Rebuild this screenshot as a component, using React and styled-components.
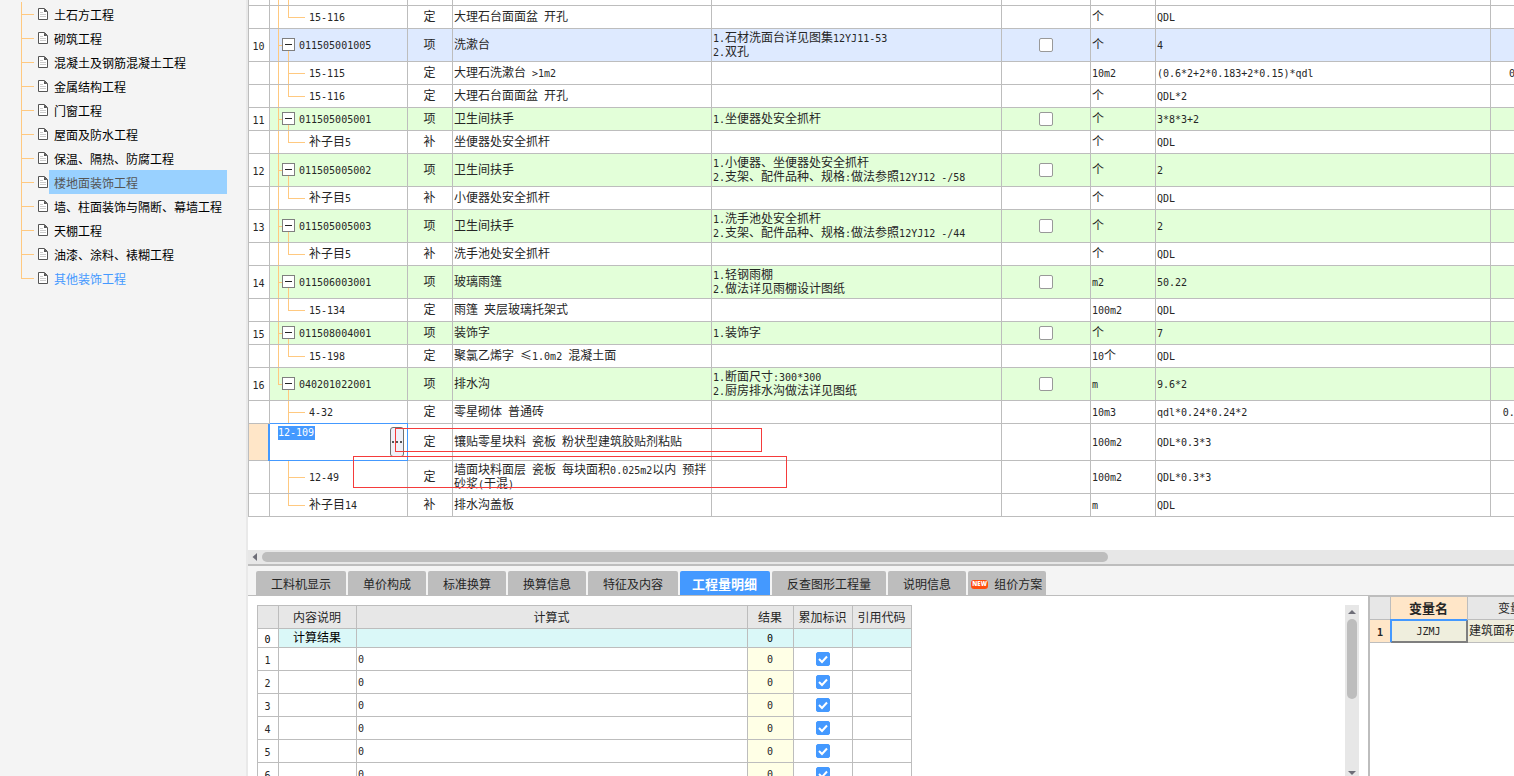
import styled, { createGlobalStyle, css } from "styled-components";

const GlobalStyle = createGlobalStyle`
  * {
    box-sizing: border-box;
  }
  body {
    margin: 0;
    background: #fff;
    color: #262626;
    font-family: "Noto Sans CJK SC", sans-serif;
    font-size: 12px;
    line-height: 14px;
  }
  button, input {
    font: inherit;
    color: inherit;
    margin: 0;
    padding: 0;
  }
`;

const LINE = "#bdbdbd";
const BLUE = "#4499ff";
const TREE = "#ffc980";

/* ---------- shared ---------- */

const Layout = styled.div`
  display: flex;
  height: 100vh;
  overflow: hidden;
`;

const Main = styled.main`
  flex: 1;
  min-width: 0;
  display: flex;
  flex-direction: column;
`;

const Latin = styled.span`
  font-family: "DejaVu Sans Mono", monospace;
  font-size: 10px;
  line-height: 10px;
`;

// half width characters get the mono font, the rest keeps the chinese one
function Text({ children }) {
  return String(children)
    .split(/([\x20-\x7e]+)/)
    .filter(Boolean)
    .map((part, i) =>
      /^[\x20-\x7e]/.test(part) ? <Latin key={i}>{part}</Latin> : part
    );
}

/* ---------- sidebar ---------- */

const Sidebar = styled.nav`
  flex: 0 0 248px;
  padding-top: 2px;
  background: #f4f4f4;
  border-right: 2px solid #e9e9e9;
`;

const TreeList = styled.ul`
  list-style: none;
  margin: 0;
  padding: 0 19px 0 21px;
`;

const TreeItem = styled.li`
  display: flex;
  align-items: center;
  height: 24px;
  padding-left: 17px;
  background-image: linear-gradient(${TREE}, ${TREE}), linear-gradient(${TREE}, ${TREE});
  background-repeat: no-repeat;
  background-size: 1px 100%, 13px 1px;
  background-position: 0 0, 0 12px;

  &:last-child {
    background-size: 1px 13px, 13px 1px;
  }
`;

const TreeLink = styled.a`
  flex: 1;
  height: 24px;
  margin-left: 1px;
  padding-left: 5px;
  line-height: 26px;
  white-space: nowrap;
  text-decoration: none;
  color: ${(p) => (p.$active ? BLUE : p.$selected ? "#555" : "#000")};
  background: ${(p) => (p.$selected ? "#99d1ff" : "none")};
`;

const sections = [
  "土石方工程",
  "砌筑工程",
  "混凝土及钢筋混凝土工程",
  "金属结构工程",
  "门窗工程",
  "屋面及防水工程",
  "保温、隔热、防腐工程",
  "楼地面装饰工程",
  "墙、柱面装饰与隔断、幕墙工程",
  "天棚工程",
  "油漆、涂料、裱糊工程",
  "其他装饰工程",
];

function DocIcon() {
  return (
    <svg width="10" height="12" viewBox="0 0 10 12" fill="none" aria-hidden="true">
      <path d="M0.5 0.5H6.5L9.5 3.5V11.5H0.5Z" fill="#fff" stroke="#555" />
      <path d="M6 0.5V4H9.5Z" fill="#555" />
      <path d="M2 4.5H5M2 6.5H8M2 8.5H8" stroke="#ccc" />
    </svg>
  );
}

/* ---------- bill table ---------- */

const BillPane = styled.section`
  position: relative;
  flex: 1;
  min-height: 0;
  overflow: hidden;
`;

const BillTable = styled.table`
  width: 100%;
  min-width: 1300px;
  table-layout: fixed;
  border-collapse: separate;
  border-spacing: 0;
  border-left: 1px solid ${LINE};
`;

const rowColors = {
  current: "#deeaff",
  item: "#e3ffd9",
};

const Row = styled.tr`
  height: ${(p) => p.$h}px;
  background: ${(p) => rowColors[p.$kind] || "#fff"};
`;

const Cell = styled.td`
  padding: 0 2px 2px 1px;
  border-right: 1px solid ${LINE};
  border-bottom: 1px solid ${LINE};
  text-align: ${(p) => p.$align || "left"};
  vertical-align: middle;
  white-space: pre-wrap;
  overflow: hidden;
`;

const IndexCell = styled(Cell)`
  padding: 0 1px 1px 0;
  text-align: center;
  background: ${(p) => (p.$editing ? "#ffe6c8" : "#fff")};
`;

const trunk = {
  full: "1px 100%",
  half: "1px 50%",
  none: "0 0",
};

// trunk, trunk branch, child line, child branch
const CodeCell = styled(Cell)`
  padding: 0 0 2px;
  background-image: linear-gradient(${TREE}, ${TREE}), linear-gradient(${TREE}, ${TREE}),
    linear-gradient(${TREE}, ${TREE}), linear-gradient(${TREE}, ${TREE});
  background-repeat: no-repeat;
  background-position: 8px 0, 8px 50%, 18px ${(p) => (p.$item ? "100%" : "0")}, 18px 50%;
  background-size: ${(p) => trunk[p.$trunk]}, ${(p) => (p.$item ? "5px 1px" : "0 0")},
    1px ${(p) => (p.$item || p.$last ? "50%" : "100%")},
    ${(p) => (p.$item || p.$blank ? "0 0" : "17px 1px")};
`;

const CodeLine = styled.div`
  display: flex;
  align-items: center;
  gap: 4px;
  padding-left: ${(p) => (p.$item ? 12 : 39)}px;
  white-space: nowrap;
`;

const Toggle = styled.button`
  display: grid;
  place-items: center;
  width: 13px;
  height: 13px;
  border: 1px solid #7f7f7f;
  background: #fff;

  &::before {
    content: "";
    width: 7px;
    height: 1px;
    background: #262626;
  }
`;

const EditCell = styled(Cell)`
  padding: 0;
  background: #fff;
  border-color: ${BLUE};
  box-shadow: -1px 0 ${BLUE}, -2px 0 ${BLUE}, 0 -1px ${BLUE};
`;

const EditBox = styled.div`
  display: flex;
  justify-content: space-between;
  height: 32px;
  padding: 0 3px 0 8px;
`;

const CodeInput = styled.input`
  width: 37px;
  height: 14px;
  border: 0;
  outline: 0;
  font-family: "DejaVu Sans Mono", monospace;
  font-size: 10px;
  color: #fff;
  background: ${BLUE};
`;

const MoreButton = styled.button`
  display: flex;
  align-items: center;
  justify-content: center;
  align-self: center;
  gap: 2px;
  width: 14px;
  height: 30px;
  border: 1px solid #707070;
  border-radius: 3px;
  background: #f0f0f8;

  i {
    width: 2px;
    height: 2px;
    background: #555;
  }
`;

const Box = styled.input`
  display: block;
  appearance: none;
  grid-area: 1 / 1;
  width: 14px;
  height: 14px;
  border: 1px solid #999;
  border-radius: 2px;
  background: #fff;

  &:checked {
    border-color: ${BLUE};
    background: ${BLUE};
  }
`;

const CheckWrap = styled.label`
  display: grid;
  place-items: center;
  padding: 1px 0 0 1px;

  svg {
    grid-area: 1 / 1;
    pointer-events: none;
  }
`;

const Mark = styled.div`
  position: absolute;
  left: ${(p) => p.$x}px;
  top: ${(p) => p.$y}px;
  width: ${(p) => p.$w}px;
  height: ${(p) => p.$h}px;
  border: 1px solid #f53b3b;
  pointer-events: none;
`;

const rows = [
  { h: 6 },
  { h: 23, code: "15-116", type: "定", name: "大理石台面面盆 开孔", unit: "个", qty: "QDL", last: true },
  { h: 33, no: 10, kind: "current", code: "011505001005", type: "项", name: "洗漱台", note: "1.石材洗面台详见图集12YJ11-53\n2.双孔", unit: "个", qty: "4" },
  { h: 23, code: "15-115", type: "定", name: "大理石洗漱台 >1m2", unit: "10m2", qty: "(0.6*2+2*0.183+2*0.15)*qdl", sum: "0.7464" },
  { h: 23, code: "15-116", type: "定", name: "大理石台面面盆 开孔", unit: "个", qty: "QDL*2", last: true },
  { h: 23, no: 11, kind: "item", code: "011505005001", type: "项", name: "卫生间扶手", note: "1.坐便器处安全抓杆", unit: "个", qty: "3*8*3+2" },
  { h: 23, code: "补子目5", type: "补", name: "坐便器处安全抓杆", unit: "个", qty: "QDL", last: true },
  { h: 33, no: 12, kind: "item", code: "011505005002", type: "项", name: "卫生间扶手", note: "1.小便器、坐便器处安全抓杆\n2.支架、配件品种、规格:做法参照12YJ12 -/58", unit: "个", qty: "2" },
  { h: 23, code: "补子目5", type: "补", name: "小便器处安全抓杆", unit: "个", qty: "QDL", last: true },
  { h: 33, no: 13, kind: "item", code: "011505005003", type: "项", name: "卫生间扶手", note: "1.洗手池处安全抓杆\n2.支架、配件品种、规格:做法参照12YJ12 -/44", unit: "个", qty: "2" },
  { h: 23, code: "补子目5", type: "补", name: "洗手池处安全抓杆", unit: "个", qty: "QDL", last: true },
  { h: 33, no: 14, kind: "item", code: "011506003001", type: "项", name: "玻璃雨篷", note: "1.轻钢雨棚\n2.做法详见雨棚设计图纸", unit: "m2", qty: "50.22" },
  { h: 23, code: "15-134", type: "定", name: "雨篷 夹层玻璃托架式", unit: "100m2", qty: "QDL", last: true },
  { h: 23, no: 15, kind: "item", code: "011508004001", type: "项", name: "装饰字", note: "1.装饰字", unit: "个", qty: "7" },
  { h: 23, code: "15-198", type: "定", name: "聚氯乙烯字 ≤1.0m2 混凝土面", unit: "10个", qty: "QDL", last: true },
  { h: 33, no: 16, kind: "item", code: "040201022001", type: "项", name: "排水沟", note: "1.断面尺寸:300*300\n2.厨房排水沟做法详见图纸", unit: "m", qty: "9.6*2", trunk: "half" },
  { h: 23, code: "4-32", type: "定", name: "零星砌体 普通砖", unit: "10m3", qty: "qdl*0.24*0.24*2", sum: "0.22118", trunk: "none" },
  { h: 37, code: "12-109", type: "定", name: "镶贴零星块料 瓷板 粉状型建筑胶贴剂粘贴", unit: "100m2", qty: "QDL*0.3*3", editing: true },
  { h: 33, code: "12-49", type: "定", name: "墙面块料面层 瓷板 每块面积0.025m2以内 预拌砂浆(干混)", unit: "100m2", qty: "QDL*0.3*3", trunk: "none" },
  { h: 23, code: "补子目14", type: "补", name: "排水沟盖板", unit: "m", qty: "QDL", trunk: "none", last: true },
];

function BillRow({ row }) {
  const isItem = Boolean(row.no);

  return (
    <Row $h={row.h} $kind={row.kind}>
      <IndexCell $editing={row.editing}>{isItem && <Text>{row.no}</Text>}</IndexCell>
      {row.editing ? (
        <EditCell>
          <EditBox>
            <CodeInput aria-label="编码" defaultValue={row.code} />
            <MoreButton type="button" aria-label="更多">
              <i />
              <i />
              <i />
            </MoreButton>
          </EditBox>
        </EditCell>
      ) : (
        <CodeCell
          $item={isItem}
          $blank={!row.code}
          $last={row.last}
          $trunk={row.trunk || "full"}
        >
          {row.code && (
            <CodeLine $item={isItem}>
              {isItem && <Toggle type="button" aria-label="折叠" />}
              <span>
                <Text>{row.code}</Text>
              </span>
            </CodeLine>
          )}
        </CodeCell>
      )}
      <Cell $align="center">{row.type}</Cell>
      <Cell>{row.name && <Text>{row.name}</Text>}</Cell>
      <Cell>{row.note && <Text>{row.note}</Text>}</Cell>
      <Cell>
        {isItem && (
          <CheckWrap>
            <Box type="checkbox" aria-label={row.name} />
          </CheckWrap>
        )}
      </Cell>
      <Cell>{row.unit && <Text>{row.unit}</Text>}</Cell>
      <Cell>{row.qty && <Text>{row.qty}</Text>}</Cell>
      <Cell $align="right">{row.sum && <Text>{row.sum}</Text>}</Cell>
    </Row>
  );
}

/* ---------- scroll bars ---------- */

const HScroll = styled.div`
  flex: 0 0 16px;
  display: flex;
  align-items: center;
  gap: 5px;
  padding-left: 4px;
  background: #e7e7e7;
  border-bottom: 2px solid ${LINE};
`;

const HThumb = styled.div`
  width: 67%;
  height: 10px;
  border-radius: 5px;
  background: ${LINE};
`;

const VScroll = styled.div`
  display: flex;
  flex-direction: column;
  align-items: center;
  flex: 0 0 14px;
  margin: 9px 9px 0 0;
  padding: 5px 0 1px;
  background: #e7e7e7;
`;

const VThumb = styled.div`
  width: 10px;
  height: 80px;
  margin: 5px 0 auto;
  border-radius: 5px;
  background: ${LINE};
`;

function Arrow({ dir }) {
  if (dir === "left")
    return (
      <svg width="5" height="8" viewBox="0 0 5 8" aria-hidden="true">
        <path d="M5 0V8L0.5 4Z" fill="#6e6e78" />
      </svg>
    );
  return (
    <svg width="8" height="4" viewBox="0 0 8 4" aria-hidden="true">
      <path d={dir === "up" ? "M0 4H8L4 0Z" : "M0 0H8L4 4Z"} fill="#6e6e78" />
    </svg>
  );
}

/* ---------- tabs ---------- */

const Tabs = styled.div`
  flex: 0 0 30px;
  display: flex;
  align-items: flex-end;
  gap: 2px;
  padding-left: 8px;
  background: #f4f4f4;
  border-bottom: 1px solid ${LINE};
`;

const Tab = styled.button`
  display: flex;
  align-items: center;
  justify-content: center;
  gap: 6px;
  height: 24px;
  padding: 2px 15px 0;
  border: 0;
  border-radius: 2px 2px 0 0;
  white-space: nowrap;
  background: ${LINE};

  ${(p) =>
    p.$active &&
    css`
      padding: 1px 13px 0 12px;
      font-size: 13px;
      font-weight: 700;
      color: #fff;
      background: ${BLUE};
    `}

  ${(p) =>
    p.$badge &&
    css`
      padding: 2px 4px 0 3px;
    `}
`;

const NewBadge = styled.span`
  width: 17px;
  height: 9px;
  border-radius: 3px;
  font-family: "Open Sans", sans-serif;
  font-size: 6px;
  font-weight: 800;
  line-height: 9px;
  text-align: center;
  color: #fff;
  background: #ff4f0f;
`;

const tabs = [
  "工料机显示",
  "单价构成",
  "标准换算",
  "换算信息",
  "特征及内容",
  "工程量明细",
  "反查图形工程量",
  "说明信息",
  "组价方案",
];

/* ---------- bottom panels ---------- */

const Bottom = styled.div`
  flex: 0 0 180px;
  display: flex;
  min-height: 0;
  overflow: hidden;
`;

const DetailPane = styled.section`
  flex: 1;
  min-width: 0;
  display: flex;
  justify-content: space-between;
`;

const DetailTable = styled.table`
  width: 655px;
  align-self: flex-start;
  margin: 9px 0 0 9px;
  table-layout: fixed;
  border-collapse: separate;
  border-spacing: 0;
  border-left: 1px solid ${LINE};
  border-top: 1px solid ${LINE};
`;

const HeadCell = styled.th`
  height: 23px;
  padding: 0 1px 0 0;
  border-right: 1px solid ${LINE};
  border-bottom: 1px solid ${LINE};
  font-size: ${(p) => (p.$current ? 13 : 12)}px;
  font-weight: ${(p) => (p.$current ? 700 : 400)};
  white-space: nowrap;
  background: ${(p) => (p.$current ? "#ffe6c8" : "#e7e7e7")};
`;

const TotalRow = styled.tr`
  height: 19px;
  color: #000;

  td:not(:first-child) {
    background: #daf8f8;
  }
`;

const DetailRow = styled.tr`
  height: 23px;

  td:nth-child(4) {
    background: #ffffe6;
  }
`;

const VarPane = styled.section`
  flex: 0 0 146px;
  overflow: hidden;
  border-left: 2px solid ${LINE};
`;

const VarTable = styled.table`
  width: 208px;
  table-layout: fixed;
  border-collapse: separate;
  border-spacing: 0;
  border-top: 1px solid ${LINE};
`;

const VarIndex = styled(Cell)`
  height: 23px;
  padding: 0 0 1px;
  text-align: center;
  font-weight: 700;
  background: #ffe6c8;
`;

const VarCell = styled(Cell)`
  background: #efeedd;
`;

const VarCurrent = styled(VarCell)`
  border-right: 2px solid #7f7f7f;
  border-bottom: 2px solid #7f7f7f;
  border-left: 1px solid ${BLUE};
  border-top: 1px solid ${BLUE};
  box-shadow: -1px -1px ${BLUE};
  text-align: center;
`;

function CheckMark() {
  return (
    <svg width="10" height="10" viewBox="0 0 10 10" fill="none" aria-hidden="true">
      <path d="M1 5L4 8L9 2.5" stroke="#fff" strokeWidth="2" />
    </svg>
  );
}

function Details() {
  return (
    <DetailTable>
      <colgroup>
        <col width="21" />
        <col width="78" />
        <col width="391" />
        <col width="46" />
        <col width="59" />
        <col width="59" />
      </colgroup>
      <thead>
        <tr>
          <HeadCell />
          <HeadCell>内容说明</HeadCell>
          <HeadCell>计算式</HeadCell>
          <HeadCell>结果</HeadCell>
          <HeadCell>累加标识</HeadCell>
          <HeadCell>引用代码</HeadCell>
        </tr>
      </thead>
      <tbody>
        <TotalRow>
          <IndexCell>
            <Text>0</Text>
          </IndexCell>
          <Cell $align="center">计算结果</Cell>
          <Cell />
          <Cell $align="center">
            <Text>0</Text>
          </Cell>
          <Cell />
          <Cell />
        </TotalRow>
        {[1, 2, 3, 4, 5, 6].map((n) => (
          <DetailRow key={n}>
            <IndexCell>
              <Text>{n}</Text>
            </IndexCell>
            <Cell />
            <Cell>
              <Text>0</Text>
            </Cell>
            <Cell $align="center">
              <Text>0</Text>
            </Cell>
            <Cell>
              <CheckWrap>
                <Box type="checkbox" defaultChecked aria-label="累加标识" />
                <CheckMark />
              </CheckWrap>
            </Cell>
            <Cell />
          </DetailRow>
        ))}
      </tbody>
    </DetailTable>
  );
}

function Variables() {
  return (
    <VarTable>
      <colgroup>
        <col width="21" />
        <col width="77" />
        <col width="110" />
      </colgroup>
      <thead>
        <tr>
          <HeadCell />
          <HeadCell $current>变量名</HeadCell>
          <HeadCell>变量说明</HeadCell>
        </tr>
      </thead>
      <tbody>
        <tr>
          <VarIndex>
            <Text>1</Text>
          </VarIndex>
          <VarCurrent>
            <Text>JZMJ</Text>
          </VarCurrent>
          <VarCell>建筑面积</VarCell>
        </tr>
      </tbody>
    </VarTable>
  );
}

function App() {
  return (
    <>
      <GlobalStyle />
      <Layout>
        <Sidebar>
          <TreeList>
            {sections.map((name, i) => (
              <TreeItem key={name}>
                <DocIcon />
                <TreeLink
                  href="#"
                  $selected={i === 7}
                  $active={i === sections.length - 1}
                >
                  {name}
                </TreeLink>
              </TreeItem>
            ))}
          </TreeList>
        </Sidebar>

        <Main>
          <BillPane>
            <BillTable>
              <colgroup>
                <col width="21" />
                <col width="138" />
                <col width="45" />
                <col width="259" />
                <col width="290" />
                <col width="89" />
                <col width="65" />
                <col width="335" />
                <col />
              </colgroup>
              <tbody>
                {rows.map((row, i) => (
                  <BillRow key={i} row={row} />
                ))}
              </tbody>
            </BillTable>
            <Mark $x={147} $y={428} $w={367} $h={24} />
            <Mark $x={105} $y={456} $w={434} $h={32} />
          </BillPane>

          <HScroll>
            <Arrow dir="left" />
            <HThumb />
          </HScroll>

          <Tabs role="tablist">
            {tabs.map((name) => (
              <Tab
                key={name}
                type="button"
                role="tab"
                $active={name === "工程量明细"}
                $badge={name === "组价方案"}
              >
                {name === "组价方案" && <NewBadge>NEW</NewBadge>}
                {name}
              </Tab>
            ))}
          </Tabs>

          <Bottom>
            <DetailPane>
              <Details />
              <VScroll>
                <Arrow dir="up" />
                <VThumb />
                <Arrow dir="down" />
              </VScroll>
            </DetailPane>
            <VarPane>
              <Variables />
            </VarPane>
          </Bottom>
        </Main>
      </Layout>
    </>
  );
}

export default App;
